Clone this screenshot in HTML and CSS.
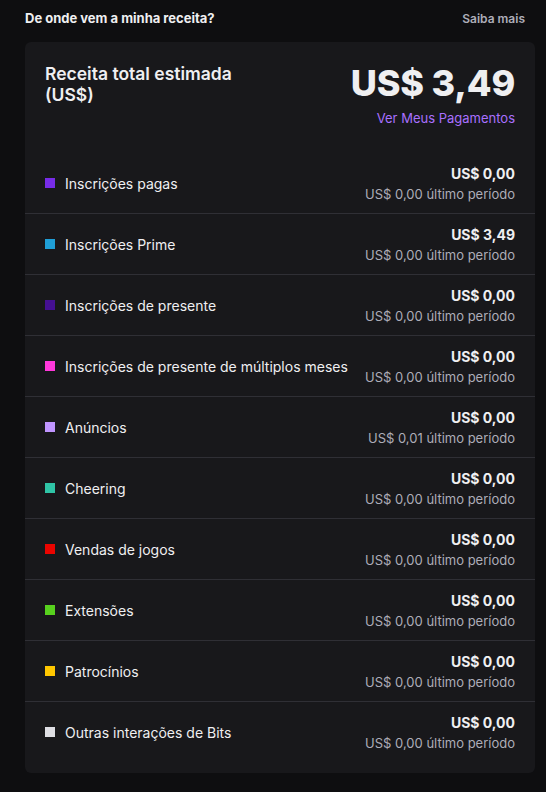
FILE: index.html
```html
<!DOCTYPE html>
<html lang="pt-BR">
<head>
<meta charset="utf-8">
<link rel="stylesheet" href="styles.css">
</head>
<body>
<div class="page">
  <div class="top">
    <h2 class="top-title">De onde vem a minha receita?</h2>
    <span class="top-link">Saiba mais</span>
  </div>
  <div class="card">
    <div class="summary">
      <div class="summary-title">Receita total estimada<br>(US$)</div>
      <div class="summary-right">
        <div class="total">US$ 3,49</div>
        <a class="pay-link">Ver Meus Pagamentos</a>
      </div>
    </div>
    <div class="rows">
      <div class="row"><div class="label"><span class="sq c1"></span>Inscrições pagas</div><div class="vals"><div class="val">US$ 0,00</div><div class="prev">US$ 0,00 último período</div></div></div>
      <div class="row"><div class="label"><span class="sq c2"></span>Inscrições Prime</div><div class="vals"><div class="val">US$ 3,49</div><div class="prev">US$ 0,00 último período</div></div></div>
      <div class="row"><div class="label"><span class="sq c3"></span>Inscrições de presente</div><div class="vals"><div class="val">US$ 0,00</div><div class="prev">US$ 0,00 último período</div></div></div>
      <div class="row"><div class="label"><span class="sq c4"></span>Inscrições de presente de múltiplos meses</div><div class="vals"><div class="val">US$ 0,00</div><div class="prev">US$ 0,00 último período</div></div></div>
      <div class="row"><div class="label"><span class="sq c5"></span>Anúncios</div><div class="vals"><div class="val">US$ 0,00</div><div class="prev">US$ 0,01 último período</div></div></div>
      <div class="row"><div class="label"><span class="sq c6"></span>Cheering</div><div class="vals"><div class="val">US$ 0,00</div><div class="prev">US$ 0,00 último período</div></div></div>
      <div class="row"><div class="label"><span class="sq c7"></span>Vendas de jogos</div><div class="vals"><div class="val">US$ 0,00</div><div class="prev">US$ 0,00 último período</div></div></div>
      <div class="row"><div class="label"><span class="sq c8"></span>Extensões</div><div class="vals"><div class="val">US$ 0,00</div><div class="prev">US$ 0,00 último período</div></div></div>
      <div class="row"><div class="label"><span class="sq c9"></span>Patrocínios</div><div class="vals"><div class="val">US$ 0,00</div><div class="prev">US$ 0,00 último período</div></div></div>
      <div class="row"><div class="label"><span class="sq c10"></span>Outras interações de Bits</div><div class="vals"><div class="val">US$ 0,00</div><div class="prev">US$ 0,00 último período</div></div></div>
    </div>
  </div>
</div>
</body>
</html>
```
FILE: styles.css
```css
html, body {
  margin: 0;
  padding: 0;
  background: #0e0e10;
  color: #efeff1;
  font-family: Inter, "Noto Sans", sans-serif;
}
.page {
  width: 510px;
  padding: 0 11px 0 25px;
}
.top {
  display: flex;
  justify-content: space-between;
  align-items: center;
  height: 36px;
  margin-bottom: 6px;
}
.top-title {
  margin: 0;
  font-size: 13px;
  font-weight: 700;
  color: #efeff1;
}
.top-link {
  font-size: 12px;
  font-weight: 600;
  color: #adadb8;
  margin-right: 10px;
}
.card {
  background: #18181b;
  border-radius: 6px;
  padding: 20px 20px 11px 20px;
}
.summary {
  display: flex;
  justify-content: space-between;
  align-items: flex-start;
  padding-bottom: 27px;
}
.summary-title {
  font-size: 17.5px;
  font-weight: 600;
  line-height: 21px;
  margin-top: 1px;
  color: #efeff1;
}
.summary-right {
  display: flex;
  flex-direction: column;
  align-items: flex-end;
}
.total {
  font-size: 36px;
  font-weight: 800;
  line-height: 42px;
  letter-spacing: -0.2px;
  color: #efeff1;
}
.pay-link {
  font-size: 13px;
  color: #a970ff;
  margin-top: 6px;
  line-height: 16px;
}
.row {
  display: flex;
  justify-content: space-between;
  align-items: center;
  height: 60px;
  border-bottom: 1px solid #2f2f35;
  margin: 0 -20px;
  padding: 0 20px;
}
.row:last-child {
  border-bottom: none;
}
.label {
  display: flex;
  align-items: center;
  font-size: 14px;
  color: #efeff1;
}
.sq {
  width: 10px;
  height: 10px;
  margin-right: 10px;
  flex: none;
}
.c1 { background: #772ce8; }
.c2 { background: #1f9ed6; }
.c3 { background: #451093; }
.c4 { background: #ff38db; }
.c5 { background: #bf94ff; }
.c6 { background: #2fc4a6; }
.c7 { background: #eb0400; }
.c8 { background: #57d11e; }
.c9 { background: #ffc700; }
.c10 { background: #dedee3; }
.vals {
  text-align: right;
}
.val {
  font-size: 14px;
  font-weight: 700;
  line-height: 20px;
  margin-top: 1px;
  color: #efeff1;
}
.prev {
  font-size: 13px;
  line-height: 20px;
  color: #adadb8;
}
```
